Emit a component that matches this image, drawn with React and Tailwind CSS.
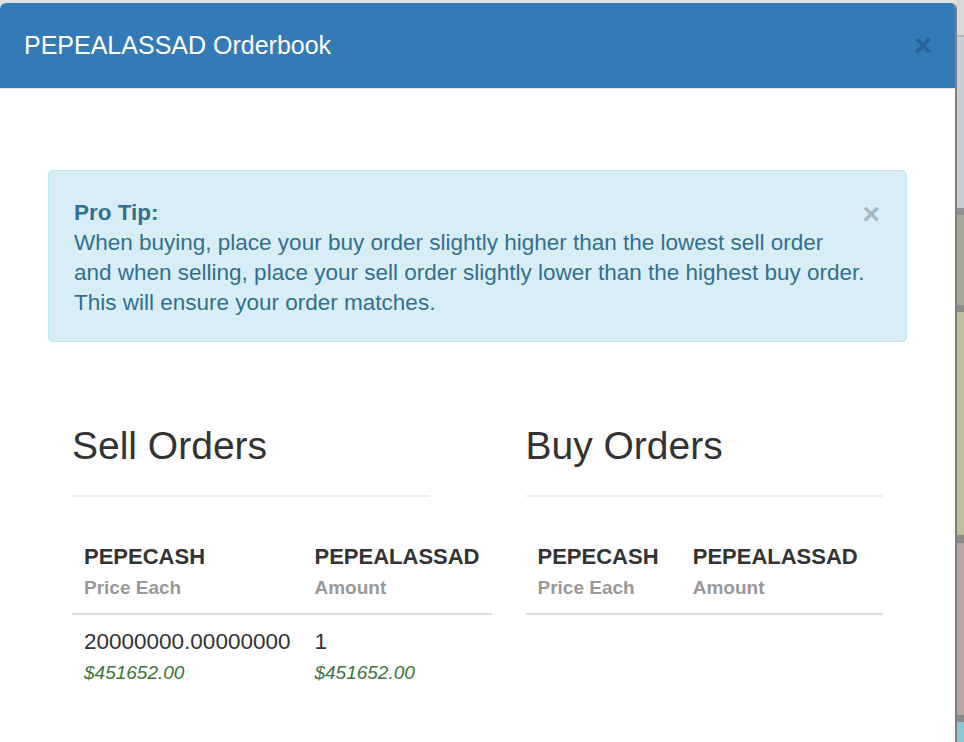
import React from "react";

const strip = [
  { h: "h-[35px]", c: "bg-[#d9d9d9]" },
  { h: "h-[2px]", c: "bg-[#b5b5b5]" },
  { h: "h-[171px]", c: "bg-[#c6cfd3]" },
  { h: "h-[7px]", c: "bg-[#8f9190]" },
  { h: "h-[90px]", c: "bg-[#a9a999]" },
  { h: "h-[7px]", c: "bg-[#8e8e86]" },
  { h: "h-[223px]", c: "bg-[#bfbfa0]" },
  { h: "h-[8px]", c: "bg-[#8f8a86]" },
  { h: "h-[172px]", c: "bg-[#b6a8a0]" },
  { h: "h-[7px]", c: "bg-[#8a8a8a]" },
  { h: "h-[20px]", c: "bg-[#8ec6d4]" },
];

const OrderTable = ({ title, rows }) => (
  <div className="px-12">
    <h2 className="mt-[82px] text-[39px] leading-[44px] text-[#333333]">{title}</h2>
    <div className="mt-[27px] h-[2px] bg-[#eeeeee]" />
    <table className="mt-[33px] w-full text-left text-[#333333]">
      <thead>
        <tr className="border-b-2 border-[#dddddd]">
          <th className="px-3 py-3 align-bottom font-bold">
            <div className="text-[22px] leading-[30px]">PEPECASH</div>
            <div className="mt-[3px] text-[19px] leading-[26px] text-[#999999]">Price Each</div>
          </th>
          <th className="px-3 py-3 align-bottom font-bold">
            <div className="text-[22px] leading-[30px]">PEPEALASSAD</div>
            <div className="mt-[3px] text-[19px] leading-[26px] text-[#999999]">Amount</div>
          </th>
        </tr>
      </thead>
      <tbody>
        {rows.map((r, i) => (
          <tr key={i}>
            <td className="px-3 py-3 align-top">
              <div className="text-[22.5px] leading-[30px]">{r.price}</div>
              <div className="mt-[3px] text-[19px] italic leading-[26px] text-[#3c763d]">{r.usd}</div>
            </td>
            <td className="px-3 py-3 align-top">
              <div className="text-[22.5px] leading-[30px]">{r.amount}</div>
              <div className="mt-[3px] text-[19px] italic leading-[26px] text-[#3c763d]">{r.usd}</div>
            </td>
          </tr>
        ))}
      </tbody>
    </table>
  </div>
);

const App = () => {
  const sells = [{ price: "20000000.00000000", amount: "1", usd: "$451652.00" }];

  return (
    <div
      className="flex h-[742px] w-[964px] overflow-hidden bg-[#d9d9d9]"
      style={{ fontFamily: "'Liberation Sans', Arial, sans-serif" }}
    >
      <div className="flex w-[957px] flex-col">
        <div className="h-[3px] shrink-0 bg-[#e2e2e2]" />
        <div className="flex flex-1 flex-col overflow-hidden rounded-t-[6px] border-r-2 border-[#7e7e7e] bg-white">
          {/* header */}
          <div className="flex h-[86px] shrink-0 items-center justify-between border-b border-[#e5e5e5] bg-[#337ab7] pl-6 pr-[23px]">
            <h4 className="text-[25px] leading-none text-white">PEPEALASSAD Orderbook</h4>
            <span className="text-[31px] font-bold leading-none text-[#29629a]">×</span>
          </div>

          {/* body */}
          <div className="px-12 pt-[81px]">
            <div className="relative whitespace-nowrap rounded-[5px] border border-[#bce8f1] bg-[#d9edf7] pb-[23px] pl-[25px] pr-[20px] pt-[27px] text-[22.5px] leading-[30px] text-[#31708f]">
              <span className="absolute right-[26px] top-[28px] text-[30px] font-bold leading-none text-[#a9b6bd]">×</span>
              <strong className="block">Pro Tip:</strong>
              <div>When buying, place your buy order slightly higher than the lowest sell order</div>
              <div>and when selling, place your sell order slightly lower than the highest buy order.</div>
              <div>This will ensure your order matches.</div>
            </div>

            <div className="-mx-6 grid grid-cols-2">
              <OrderTable title="Sell Orders" rows={sells} />
              <OrderTable title="Buy Orders" rows={[]} />
            </div>
          </div>
        </div>
      </div>
      <div className="flex w-[7px] flex-col">
        {strip.map((s, i) => (
          <div key={i} className={`${s.h} ${s.c} shrink-0`} />
        ))}
      </div>
    </div>
  );
};

export default App;
